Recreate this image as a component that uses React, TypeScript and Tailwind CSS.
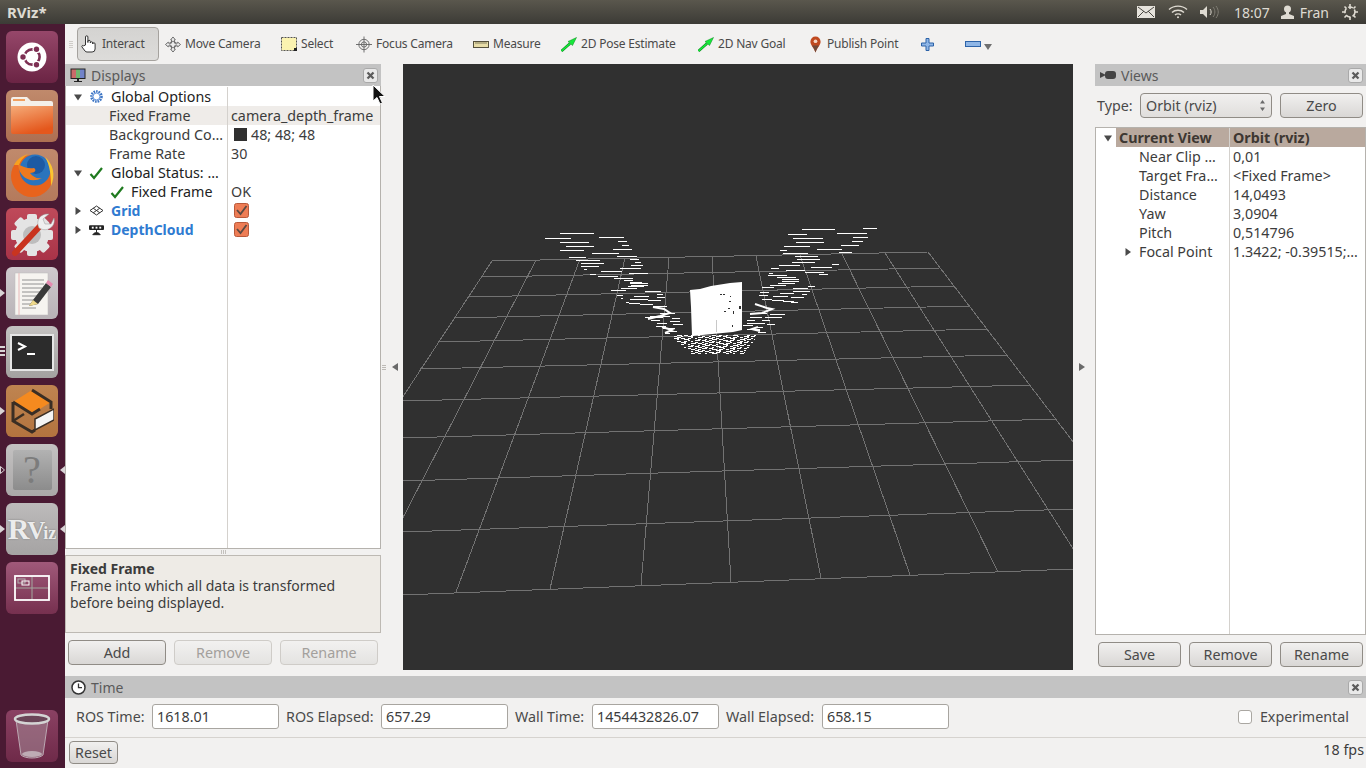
import type { ReactNode } from 'react';

const cloudLines: number[][] = [
  [120,222,70],[75,153,85],[237,312,82],[293,322,94],[120,207,97],[305,327,105],[138,222,109],[279,336,118],[120,192,121],[216,297,130],[291,351,139],[147,198,142],[168,240,151],[330,357,148],[183,252,160],[345,363,157],[183,237,169],[333,369,166],[300,363,175],[192,201,178],[243,306,184],[327,384,190],[210,228,193],[234,294,199],[282,339,205],[312,339,211],[330,366,217],[330,384,220],[333,384,226],[324,372,229],[303,351,235],[273,318,241],[375,423,244],[411,429,253],[291,309,256],[342,387,259],[411,435,262],[303,309,265],[330,384,268],[384,423,271],[318,327,277],[327,360,280],[360,400,283],[400,440,287],[420,465,310],[375,430,322],[390,450,318],[455,480,325],[393,420,331],[450,480,334],[411,440,340],[460,490,343],[408,438,349],[430,465,355],[440,470,362],[435,450,370],
  [1029,1071,55],[846,945,58],[951,1041,70],[804,861,73],[999,1044,82],[819,909,85],[996,1029,94],[828,912,97],[963,1017,106],[792,870,109],[891,966,118],[780,801,121],[957,996,127],[789,864,130],[825,894,139],[831,899,148],[840,885,157],[816,882,157],[936,957,163],[777,840,166],[873,936,172],[753,777,175],[798,855,181],[855,912,187],[747,759,190],[897,924,193],[744,801,196],[771,828,202],[786,837,208],[786,837,214],[774,825,220],[750,798,226],[864,885,229],[726,762,232],[819,864,235],[819,870,244],[720,747,247],[780,822,250],[846,861,253],[717,744,256],[759,804,259],[813,852,262],[726,756,268],[756,792,271],[789,822,274],[813,834,277],[690,740,310],[750,795,313],[690,725,322],[735,785,322],[680,705,331],[725,750,331],[680,735,340],[740,765,343],[670,700,346],[705,730,352],[680,720,358],[715,738,367],
];

const gridRows: number[][] = [
  [492,261,928,252],[481,277,940,268],[468,297,955,286],[454,318,970,306],[438,342,988,329],[420,369,1007,355],
  [403,401,1031,385],[403,438,1057,419],[403,481,1073,460],[403,532,1073,509],[403,595,1073,569],
];
const gridCols: number[][] = [
  [492,261,270,599],[536,260,363,595],[580,259,456,592],[625,258,550,589],[669,258,641,585],[712,257,731,582],
  [756,256,821,578],[800,255,910,575],[842,254,998,572],[885,253,1086,569],[928,252,1168,566],
];

const mapX = (x: number) => Math.round(x / 3 + 520);
const mapY = (y: number) => Math.round(y / 3 + 210) + 0.5;

function carpet() {
  const out: ReactNode[] = [];
  for (let r = 0; r < 19; r++) {
    const y = 376 + r * 3;
    const left = 450 + r * 3.5;
    const right = 716 - r * 2.5;
    let i = 0;
    for (let x = left + (r % 3) * 7; x < right; x += 21) {
      const len = 6 + ((r * 5 + i * 3) % 4) * 3;
      const gap = (r * 2 + i) % 5 === 0;
      if (!gap) out.push(<line key={`${r}-${i}`} x1={mapX(x)} x2={mapX(Math.min(x + len, right))} y1={mapY(y)} y2={mapY(y)} />);
      i++;
    }
  }
  return out;
}

function Viewport() {
  return (
    <svg viewBox="403 64 670 606" className="block h-[606px] w-[670px] shrink-0 bg-[#303030]">
      <g stroke="#727272" strokeWidth="1" shapeRendering="crispEdges">
        {gridRows.map((l, i) => <line key={i} x1={l[0]} y1={l[1]} x2={l[2]} y2={l[3]} />)}
        {gridCols.map((l, i) => <line key={i} x1={l[0]} y1={l[1]} x2={l[2]} y2={l[3]} />)}
      </g>
      <g stroke="#fff" strokeWidth="1" shapeRendering="crispEdges">
        {cloudLines.map((l, i) => <line key={i} x1={mapX(l[0])} x2={mapX(l[1])} y1={mapY(l[2])} y2={mapY(l[2])} />)}
        {carpet()}
      </g>
      <path d="M690 290 L700 289 L711 286 L730 283 L742 282 L742 330 L733 332 L692 336 L691 307Z" fill="#fff" />
      <g fill="#303030" shapeRendering="crispEdges">
        <rect x="720" y="294" width="2" height="1" /><rect x="723" y="294" width="2" height="1" /><rect x="730" y="296" width="1" height="1" />
        <rect x="729" y="301" width="2" height="1" /><rect x="728" y="308" width="2" height="1" /><rect x="724" y="311" width="2" height="1" />
        <rect x="733" y="311" width="1" height="3" /><rect x="739" y="306" width="2" height="3" /><rect x="732" y="325" width="1" height="2" />
      </g>
      <rect x="716" y="320" width="1" height="12" fill="#c8c8c8" />
      <g fill="none" stroke="#fff" strokeWidth="2">
        <path d="M653 307 L664 309 L670 313 L660 316 L648 319" />
        <path d="M755 304 L767 308 L772 309 L762 313 L750 314" />
        <path d="M662 327 L672 330 L665 333" />
        <path d="M758 327 L752 329 L760 331" />
      </g>
    </svg>
  );
}

function TreeArrow({ open }: { open?: boolean }) {
  return (
    <svg width="10" height="10" viewBox="0 0 10 10" className="shrink-0">
      {open ? <path d="M1 2.5h8L5 8.5z" fill="#4a4a4a" /> : <path d="M2.5 1v8L8 5z" fill="#4a4a4a" />}
    </svg>
  );
}

function Check() {
  return (
    <svg width="15" height="14" viewBox="0 0 15 14" className="shrink-0">
      <path d="M1.5 8 L5 12 L13 2" fill="none" stroke="#1f7a1f" strokeWidth="2.2" />
    </svg>
  );
}

function OrangeBox() {
  return (
    <svg width="15" height="15" viewBox="0 0 15 15">
      <rect x="0.5" y="0.5" width="14" height="14" rx="2" fill="#ee7d55" stroke="#b9593a" />
      <path d="M3 7 L6.5 11 L12.5 3" fill="none" stroke="#5b4a42" strokeWidth="1.8" />
    </svg>
  );
}

function GearIcon() {
  return (
    <svg width="15" height="15" viewBox="0 0 15 15">
      <circle cx="7.5" cy="7.5" r="5" fill="none" stroke="#3f76c4" strokeWidth="2.6" strokeDasharray="1.6 0.9" />
      <circle cx="7.5" cy="7.5" r="3.4" fill="none" stroke="#6c9be0" strokeWidth="1" />
    </svg>
  );
}

function GridIcon() {
  return (
    <svg width="15" height="11" viewBox="0 0 15 11">
      <path d="M7.5 1 L14 5.5 L7.5 10 L1 5.5Z M4.2 3.2 L10.8 7.8 M10.8 3.2 L4.2 7.8" fill="none" stroke="#333" strokeWidth="1" />
    </svg>
  );
}

function DepthIcon() {
  return (
    <svg width="16" height="12" viewBox="0 0 16 12">
      <rect x="0" y="1" width="16" height="5" rx="1" fill="#222" />
      <rect x="3" y="2.5" width="2" height="2" fill="#fff" /><rect x="7" y="2.5" width="2" height="2" fill="#fff" /><rect x="11" y="2.5" width="2" height="2" fill="#fff" />
      <path d="M8 6v3M4 11h8l-2-2H6z" fill="#222" stroke="#222" />
    </svg>
  );
}

function CloseBtn() {
  return (
    <button className="flex h-[15px] w-[15px] items-center justify-center rounded-[3px] border border-[#a9a9a9] bg-[#e9e9e9]">
      <svg width="9" height="9" viewBox="0 0 9 9"><path d="M1.5 1.5 L7.5 7.5 M7.5 1.5 L1.5 7.5" stroke="#5c5c5c" strokeWidth="2.3" /></svg>
    </button>
  );
}

function TitleBar({ icon, title }: { icon: ReactNode; title: string }) {
  return (
    <div className="flex h-[22px] shrink-0 items-center bg-[#c3c3c3] pl-[4px] pr-[3px]">
      <span className="flex w-[18px] shrink-0 justify-center">{icon}</span>
      <span className="ml-[4px] text-[14px] text-[#5a5a5a]">{title}</span>
      <span className="ml-auto"><CloseBtn /></span>
    </div>
  );
}

function Btn({ label, disabled, className }: { label: string; disabled?: boolean; className: string }) {
  return (
    <button
      className={`flex h-[25px] items-center justify-center rounded-[4px] border bg-gradient-to-b text-[14.3px] ${className} ${
        disabled ? 'border-[#cfccc8] from-[#f2f1f0] to-[#e4e3e1] text-[#a3a09c]' : 'border-[#908c86] from-[#f1f0ef] to-[#d9d7d5] text-[#4a4a4a]'
      }`}
    >
      {label}
    </button>
  );
}

function Field({ label, value, labelClass }: { label: string; value: string; labelClass: string }) {
  return (
    <div className="flex items-center">
      <span className={`whitespace-nowrap text-[14.3px] text-[#4a4a4a] ${labelClass}`}>{label}</span>
      <div className="flex h-[25px] w-[127px] items-center rounded-[3px] border border-[#a8a5a0] bg-white pl-[4px] text-[14.3px] text-[#3c3c3c]">{value}</div>
    </div>
  );
}

function Row({ left, right, leftClass = '', rowClass = '', rightClass = '', leftW }: { left: ReactNode; right?: ReactNode; leftClass?: string; rowClass?: string; rightClass?: string; leftW: string }) {
  return (
    <div className={`flex h-[19px] items-center text-[14.3px] ${rowClass}`}>
      <div className={`flex h-full shrink-0 items-center overflow-hidden whitespace-nowrap ${leftW} ${leftClass}`}>{left}</div>
      <div className={`flex h-full min-w-0 flex-1 items-center whitespace-nowrap border-l border-[#d4d1cd] pl-[3px] ${rightClass}`}>{right}</div>
    </div>
  );
}

function DisplaysPanel() {
  const w = 'w-[161px]';
  const sub = 'pl-[43px] text-[#3c3c3c]';
  return (
    <div className="flex w-[316px] shrink-0 flex-col">
      <TitleBar
        title="Displays"
        icon={
          <svg width="16" height="15" viewBox="0 0 16 15">
            <rect x="0.5" y="0.5" width="15" height="10.5" fill="#222" />
            <rect x="1.5" y="1.5" width="4.5" height="8.5" fill="#c96a6a" /><rect x="6" y="1.5" width="4" height="8.5" fill="#6fb56f" /><rect x="10" y="1.5" width="4.5" height="8.5" fill="#7183c9" />
            <path d="M7 11h2v2h3v1H4v-1h3z" fill="#222" />
          </svg>
        }
      />
      <div className="flex h-[463px] shrink-0 flex-col border-x border-b border-[#b5b2ad] bg-white pt-px text-[#3c3c3c]">
        <Row leftW={w} leftClass="pl-[7px] text-[#222]" left={<><TreeArrow open /><span className="ml-[6px] flex w-[15px] justify-center"><GearIcon /></span><span className="ml-[7px]">Global Options</span></>} />
        <Row leftW={w} leftClass={sub} rowClass="bg-[#efece9]" left="Fixed Frame" right="camera_depth_frame" />
        <Row leftW={w} leftClass={sub} left="Background Co…" right={<><span className="mr-[4px] ml-[3px] h-[13px] w-[13px] bg-[#303030]" />48; 48; 48</>} />
        <Row leftW={w} leftClass={sub} left="Frame Rate" right="30" />
        <Row leftW={w} leftClass="pl-[7px] text-[#222]" left={<><TreeArrow open /><span className="ml-[6px] flex w-[15px] justify-center"><Check /></span><span className="ml-[7px]">Global Status: …</span></>} />
        <Row leftW={w} leftClass="pl-[44px] text-[#222]" left={<><Check /><span className="ml-[6px]">Fixed Frame</span></>} right="OK" />
        <Row leftW={w} leftClass="pl-[7px] text-[14px] font-bold text-[#2f7bd1]" left={<><TreeArrow /><span className="ml-[6px] flex w-[15px] justify-center"><GridIcon /></span><span className="ml-[7px]">Grid</span></>} right={<span className="ml-[3px] flex"><OrangeBox /></span>} />
        <Row leftW={w} leftClass="pl-[7px] text-[14px] font-bold text-[#2f7bd1]" left={<><TreeArrow /><span className="ml-[6px] flex w-[15px] justify-center"><DepthIcon /></span><span className="ml-[7px]">DepthCloud</span></>} right={<span className="ml-[3px] flex"><OrangeBox /></span>} />
        <div className="flex flex-1">
          <div className="w-[161px] shrink-0" />
          <div className="flex-1 border-l border-[#d4d1cd]" />
        </div>
      </div>
      <div className="flex h-[6px] shrink-0 items-center justify-center gap-px">
        <span className="h-[4px] w-px bg-[#c4c1bd]" /><span className="h-[4px] w-px bg-[#c4c1bd]" /><span className="h-[4px] w-px bg-[#c4c1bd]" />
      </div>
      <div className="h-[78px] shrink-0 border border-[#bdb9b3] bg-[#eeebe6] px-[4px] pt-[4px] text-[14px] leading-[17px] text-[#3c3c3c]">
        <div className="font-bold">Fixed Frame</div>
        <div>Frame into which all data is transformed</div>
        <div>before being displayed.</div>
      </div>
      <div className="mt-[7px] flex gap-[8px] pl-[3px]">
        <Btn label="Add" className="w-[98px]" />
        <Btn label="Remove" disabled className="w-[98px]" />
        <Btn label="Rename" disabled className="w-[98px]" />
      </div>
    </div>
  );
}

function ViewsPanel() {
  const w = 'w-[133px]';
  const sub = 'pl-[43px]';
  return (
    <div className="flex w-[271px] shrink-0 flex-col">
      <TitleBar
        title="Views"
        icon={
          <svg width="16" height="10" viewBox="0 0 16 10"><path d="M0 2 L5 4.5 V5.5 L0 8Z" fill="#444" /><rect x="5" y="1" width="11" height="8" rx="3" fill="#444" /></svg>
        }
      />
      <div className="flex h-[41px] shrink-0 items-center pb-[2px] pl-[2px]">
        <span className="w-[43px] text-[14.3px] text-[#4a4a4a]">Type:</span>
        <div className="flex h-[25px] w-[132px] items-center justify-between rounded-[4px] border border-[#908c86] bg-gradient-to-b from-[#f1f0ef] to-[#e0dedc] pl-[5px] pr-[5px] text-[14.3px] text-[#4a4a4a]">
          Orbit (rviz)
          <svg width="7" height="13" viewBox="0 0 7 13"><path d="M3.5 1 L6 4.5H1z M3.5 12 L6 8.5H1z" fill="#6a6a6a" /></svg>
        </div>
        <Btn label="Zero" className="ml-[8px] w-[83px]" />
      </div>
      <div className="flex h-[508px] shrink-0 flex-col border border-[#b5b2ad] bg-white text-[#3c3c3c]">
        <Row leftW={w} leftClass="pl-[7px] bg-white" rowClass="font-bold" rightClass="bg-[#b9a99e] text-[#3d3732]" left={<><TreeArrow open /><span className="ml-[3px] flex h-full flex-1 items-center bg-[#b9a99e] pl-[3px] text-[#3d3732]">Current View</span></>} right="Orbit (rviz)" />
        <Row leftW={w} leftClass={sub} left="Near Clip …" right="0,01" />
        <Row leftW={w} leftClass={sub} left="Target Fra…" right="<Fixed Frame>" />
        <Row leftW={w} leftClass={sub} left="Distance" right="14,0493" />
        <Row leftW={w} leftClass={sub} left="Yaw" right="3,0904" />
        <Row leftW={w} leftClass={sub} left="Pitch" right="0,514796" />
        <Row leftW={w} leftClass="pl-[27px]" left={<><TreeArrow /><span className="ml-[6px]">Focal Point</span></>} right="1.3422; -0.39515;…" />
        <div className="flex flex-1">
          <div className="w-[133px] shrink-0" />
          <div className="flex-1 border-l border-[#d4d1cd]" />
        </div>
      </div>
      <div className="mt-[7px] flex gap-[8px] pl-[3px]">
        <Btn label="Save" className="w-[83px]" />
        <Btn label="Remove" className="w-[83px]" />
        <Btn label="Rename" className="w-[83px]" />
      </div>
    </div>
  );
}

function SplitterLeft() {
  return (
    <div className="flex h-[606px] w-[22px] shrink-0 items-center gap-[6px] pl-px">
      <span className="flex flex-col gap-px">
        <span className="h-px w-[4px] bg-[#bdbab6]" /><span className="h-px w-[4px] bg-[#bdbab6]" /><span className="h-px w-[4px] bg-[#bdbab6]" />
      </span>
      <svg width="6" height="8" viewBox="0 0 6 8"><path d="M6 0v8L0 4z" fill="#6a6a6a" /></svg>
    </div>
  );
}

function SplitterRight() {
  return (
    <div className="flex h-[606px] w-[22px] shrink-0 items-center pl-[6px]">
      <svg width="6" height="8" viewBox="0 0 6 8"><path d="M0 0v8l6-4z" fill="#6a6a6a" /></svg>
    </div>
  );
}

function ToolItem({ icon, label, className }: { icon: ReactNode; label: string; className: string }) {
  return (
    <div className={`flex items-center text-[12px] tracking-[-0.2px] text-[#4a4a4a] ${className}`}>
      <span className="flex w-[16px] shrink-0 justify-center">{icon}</span>
      <span className="ml-[4px] whitespace-nowrap">{label}</span>
    </div>
  );
}

function MoveIcon() {
  return (
    <svg width="17" height="17" viewBox="0 0 17 17" fill="#ececec" stroke="#666">
      <path d="M8.5 .5 L11 3.5 H10 V7 H13.5 V6 L16.5 8.5 L13.5 11 V10 H10 V13.5 H11 L8.5 16.5 L6 13.5 H7 V10 H3.5 V11 L.5 8.5 L3.5 6 V7 H7 V3.5 H6Z" />
      <circle cx="8.5" cy="8.5" r="3.4" fill="none" strokeWidth="0.8" />
    </svg>
  );
}

function NavArrow() {
  return (
    <svg width="16" height="15" viewBox="0 0 16 15">
      <path d="M0.5 14 L9 6.5" stroke="#0a8a1d" strokeWidth="2.6" />
      <path d="M0.5 14 L9 6.5" stroke="#16f03c" strokeWidth="1.4" />
      <path d="M7 4.5 L15.5 0.5 L11.5 8.5Z" fill="#16e83a" stroke="#0a8a1d" strokeWidth="0.5" />
    </svg>
  );
}

function Toolbar() {
  return (
    <div className="flex h-[40px] shrink-0 items-center pl-[4px]">
      <span className="flex w-[8px] shrink-0 flex-col gap-px pt-px">
        <span className="h-px w-[4px] bg-[#cfccc8]" /><span className="h-px w-[4px] bg-[#cfccc8]" /><span className="h-px w-[4px] bg-[#cfccc8]" /><span className="h-px w-[4px] bg-[#cfccc8]" />
      </span>
      <div className="flex h-[34px] w-[82px] shrink-0 items-center rounded-[4px] border border-[#a5a29e] bg-gradient-to-b from-[#d4d3d1] to-[#dddcda] pl-[3px] text-[12px] tracking-[-0.2px] text-[#4a4a4a]">
        <svg width="17" height="18" viewBox="0 0 17 18" fill="#fff" stroke="#333">
          <path d="M4.5 10 V2 a1.2 1.2 0 0 1 2.4 0 V7.5 V6.5 a1.2 1.2 0 0 1 2.4 0 V8 a1.2 1.2 0 0 1 2.4 0 V9 a1.2 1.2 0 0 1 2.4 0 V14 a3 3 0 0 1-3 3 H6 a2.5 2.5 0 0 1-2-1 L1 12 c-.7-1 .7-2.2 1.6-1.2z" />
        </svg>
        <span className="ml-[4px]">Interact</span>
      </div>
      <ToolItem className="ml-[6px] w-[116px]" label="Move Camera" icon={<MoveIcon />} />
      <ToolItem className="w-[75px]" label="Select" icon={<svg width="16" height="14" viewBox="0 0 16 14"><rect x="0.5" y="0.5" width="15" height="13" fill="#fbf3b0" stroke="#555" strokeDasharray="2 1" /><rect x="13" y="11" width="3" height="3" fill="#222" /></svg>} />
      <ToolItem className="w-[117px]" label="Focus Camera" icon={
        <svg width="17" height="17" viewBox="0 0 17 17" fill="none" stroke="#666"><circle cx="8.5" cy="8.5" r="5.5" /><path d="M8.5 0 V17 M0 8.5 H17" /><circle cx="8.5" cy="8.5" r="2.8" /></svg>
      } />
      <ToolItem className="w-[88px]" label="Measure" icon={<svg width="16" height="7" viewBox="0 0 16 7"><rect x="0.5" y="0.5" width="15" height="6" fill="#e8dda8" stroke="#55503d" /><path d="M3 1v2M5 1v2M7 1v2M9 1v2M11 1v2M13 1v2" stroke="#55503d" strokeWidth="0.7" /></svg>} />
      <ToolItem className="w-[137px]" label="2D Pose Estimate" icon={<NavArrow />} />
      <ToolItem className="w-[109px]" label="2D Nav Goal" icon={<NavArrow />} />
      <ToolItem className="w-[114px]" label="Publish Point" icon={
        <svg width="13" height="17" viewBox="0 0 14 18"><path d="M7 0.5 a5.5 5.5 0 0 1 5.5 5.5 c0 3.5-3.5 6-5.5 11.5 C5 12 1.5 9.5 1.5 6 A5.5 5.5 0 0 1 7 0.5z" fill="#c0491f" /><path d="M3.3 10 H10.7 C9 12.5 8 14.5 7 17.5 C6 14.5 5 12.5 3.3 10z" fill="#6e4a3a" /><circle cx="7" cy="5.5" r="2" fill="#f4d6c4" /></svg>
      } />
      <svg width="13" height="13" viewBox="0 0 13 13" className="shrink-0"><path d="M5 .5h3v4.5h4.5v3H8v4.5H5V8H.5V5H5z" fill="#8fb6e6" stroke="#2d63a8" /></svg>
      <svg width="16" height="6" viewBox="0 0 16 6" className="ml-[31px] shrink-0"><rect x="0.5" y="0.5" width="15" height="5" fill="#8fb6e6" stroke="#2d63a8" /></svg>
      <svg width="8" height="6" viewBox="0 0 8 6" className="ml-[3px] mt-[6px] shrink-0"><path d="M0 0h8L4 6z" fill="#6f6f6f" /></svg>
    </div>
  );
}

function Tile({ className, pipL, pipR, children }: { className: string; pipL?: 'one' | 'three' | 'hollow'; pipR?: boolean; children: ReactNode }) {
  return (
    <div className="relative h-[52px] w-[65px] shrink-0">
      {pipL === 'one' && <svg width="5" height="8" viewBox="0 0 5 8" className="absolute left-0 top-[22px]"><path d="M0 0l5 4-5 4z" fill="#d9d4d6" /></svg>}
      {pipL === 'hollow' && <svg width="5" height="8" viewBox="0 0 5 8" className="absolute left-0 top-[22px]"><path d="M.5 .5l4 3.5-4 3.5z" fill="none" stroke="#d9d4d6" /></svg>}
      {pipL === 'three' && (
        <span className="absolute left-0 top-[20px] flex flex-col gap-[2px]">
          <span className="h-[2px] w-[5px] bg-[#d9d4d6]" /><span className="h-[2px] w-[5px] bg-[#d9d4d6]" /><span className="h-[2px] w-[5px] bg-[#d9d4d6]" />
        </span>
      )}
      {pipR && <svg width="5" height="8" viewBox="0 0 5 8" className="absolute right-0 top-[22px]"><path d="M5 0L0 4l5 4z" fill="#d9d4d6" /></svg>}
      <div className={`absolute left-[6px] top-0 flex h-[52px] w-[52px] items-center justify-center overflow-hidden rounded-[6px] bg-gradient-to-b ${className}`}>
        {children}
      </div>
    </div>
  );
}

function Launcher() {
  return (
    <div className="flex w-[65px] shrink-0 flex-col gap-[7px] bg-[#4a1a33] pb-[6px] pt-[7px]">
      <Tile className="from-[#96476a] to-[#6b2444]">
        <svg width="30" height="30" viewBox="0 0 30 30">
          <circle cx="15" cy="15" r="14.5" fill="#fff" />
          <circle cx="15" cy="15" r="7.6" fill="none" stroke="#7d2f53" strokeWidth="2.6" />
          <circle cx="6" cy="15" r="4" fill="#fff" /><circle cx="19.5" cy="7.2" r="4" fill="#fff" /><circle cx="19.5" cy="22.8" r="4" fill="#fff" />
          <circle cx="6" cy="15" r="2.7" fill="#7d2f53" /><circle cx="19.5" cy="7.2" r="2.7" fill="#7d2f53" /><circle cx="19.5" cy="22.8" r="2.7" fill="#7d2f53" />
        </svg>
      </Tile>
      <Tile className="from-[#c08a6c] to-[#ad6f52]">
        <svg width="46" height="40" viewBox="0 0 46 40">
          <defs>
            <linearGradient id="folderBody" x1="0" y1="0" x2="0.4" y2="1">
              <stop offset="0" stopColor="#f5ab78" />
              <stop offset="1" stopColor="#e4571c" />
            </linearGradient>
          </defs>
          <path d="M2 3 a2 2 0 0 1 2-2 h14 l4 4 h20 a2 2 0 0 1 2 2 v8 H2z" fill="#f4f0ea" />
          <rect x="4" y="3" width="12" height="2" fill="#f0a060" />
          <path d="M2 10 H44 V36 a2 2 0 0 1-2 2 H4 a2 2 0 0 1-2-2z" fill="url(#folderBody)" />
        </svg>
      </Tile>
      <Tile className="from-[#c08a6c] to-[#b47a5c]">
        <svg width="48" height="48" viewBox="0 0 48 48">
          <circle cx="24" cy="25" r="21" fill="#e8631c" />
          <circle cx="27" cy="19" r="15.5" fill="#2b74bd" />
          <circle cx="28" cy="14" r="9" fill="#1d5aa3" />
          <path d="M10 13 C11 26 22 33 34 27 C29 28 25 26 22 22 C27 22 29 19 26 17 C20 18 15 16 10 13Z" fill="#ee7a1f" />
          <path d="M37 6 C45 13 48 24 43 35 C43 25 42 14 37 6Z" fill="#fbc531" />
          <path d="M6 14 C9 8 14 5 20 3 C15 7 12 10 11 14Z" fill="#f7a11f" />
        </svg>
      </Tile>
      <Tile className="from-[#bf4a5a] to-[#a93348]">
        <svg width="48" height="48" viewBox="0 0 48 48">
          <g fill="#e4e4e4">
            <circle cx="24" cy="25" r="17" />
            <rect x="19" y="4" width="10" height="42" rx="2" />
            <rect x="3" y="20" width="42" height="10" rx="2" />
            <rect x="19" y="4" width="10" height="42" rx="2" transform="rotate(45 24 25)" />
            <rect x="19" y="4" width="10" height="42" rx="2" transform="rotate(-45 24 25)" />
          </g>
          <circle cx="24" cy="25" r="9" fill="#bdbdbd" />
          <path d="M7 43 L33 15" stroke="#c9341f" strokeWidth="6" strokeLinecap="round" />
          <path d="M31 18 C27 10 33 3 41 4 L35 9 L37 14 L43 14 L46 8 C48 16 40 23 31 18Z" fill="#efefef" stroke="#999" strokeWidth="0.5" />
        </svg>
      </Tile>
      <Tile pipL="one" className="from-[#cfcacd] to-[#b9b3b7]">
        <svg width="44" height="44" viewBox="0 0 44 44">
          <rect x="5" y="2" width="33" height="42" fill="#f6f4f0" stroke="#bbb" strokeWidth="0.5" />
          <path d="M9 2v42" stroke="#e8b8b8" />
          <path d="M12 9h22M12 13h22M12 17h20M12 21h22M12 25h18M12 29h16M12 33h12M12 37h14" stroke="#7a7a7a" strokeWidth="0.8" />
          <path d="M19 35 L23 29 L36 12 L41 16 L28 33z" fill="#3a3a3a" />
          <path d="M19 35 L23 29 L28 33z" fill="#efd98a" />
          <path d="M36 12 L38 9 L43 13 L41 16z" fill="#e68bb0" />
        </svg>
      </Tile>
      <Tile pipL="three" className="from-[#c4c2c1] to-[#a3a1a0]">
        <div className="flex h-[37px] w-[44px] items-start border-[2px] border-[#e6e6e6] bg-[#2c2c2c] pl-[5px] pt-[5px]">
          <svg width="20" height="16" viewBox="0 0 20 16"><path d="M1 2 L8 5.5 L1 9" fill="none" stroke="#fff" strokeWidth="2" /><rect x="10" y="12" width="8" height="2" fill="#fff" /></svg>
        </div>
      </Tile>
      <Tile pipL="one" className="from-[#bf8450] to-[#b3743f]">
        <svg width="44" height="48" viewBox="0 0 44 48">
          <path d="M22 3 L41 15 L22 27 L3 15Z" fill="#f58a1f" />
          <path d="M22 3 L41 15 L41 22 M3 15 V34 L22 45 L25 43 M3 15 L22 27 L30 22" fill="none" stroke="#3a2e24" strokeWidth="3" />
          <path d="M25 32 L44 22 V33 L25 43Z" fill="#f5f5f5" stroke="#3a2e24" strokeWidth="1.5" />
          <path d="M3 34 L14 27" stroke="#3a2e24" strokeWidth="2.5" />
        </svg>
      </Tile>
      <Tile pipL="hollow" pipR className="from-[#c4c2c2] to-[#aaa8a8]">
        <div className="flex h-[40px] w-[39px] items-center justify-center rounded-[2px] bg-gradient-to-b from-[#b2b2b2] to-[#8c8c8c]">
          <span className="font-['Liberation_Serif',serif] text-[40px] leading-none text-[#7c7c7c]">?</span>
        </div>
      </Tile>
      <Tile pipL="one" pipR className="from-[#bdbbbb] to-[#a5a3a3]">
        <span className="flex items-baseline font-['Liberation_Serif',serif] font-bold leading-none text-[#ececec] [text-shadow:0_0_2px_#777]">
          <span className="text-[30px]">R</span>
          <span className="-ml-[2px] text-[25px]">V</span>
          <span className="-ml-[2px] text-[18px]">iz</span>
        </span>
      </Tile>
      <Tile className="from-[#a0597a] to-[#76304f]">
        <svg width="36" height="26" viewBox="0 0 36 26" fill="none">
          <path d="M18 1 V25 M1 13 H35" stroke="#a3a89f" />
          <rect x="1" y="1" width="34" height="24" stroke="#fff" strokeWidth="1.8" />
          <rect x="4" y="4" width="7" height="4" stroke="#b0b0b0" />
          <rect x="8" y="6" width="7" height="4" stroke="#fff" />
        </svg>
      </Tile>
      <div className="mt-auto">
        <Tile className="from-[#8a4163] to-[#6f2a49]">
          <svg width="38" height="46" viewBox="0 0 38 46">
            <path d="M3 7 L8 42 C12 46 26 46 30 42 L35 7Z" fill="#a68b98" fillOpacity="0.55" stroke="#bba7b1" />
            <ellipse cx="19" cy="41" rx="10" ry="3" fill="#ddd" fillOpacity="0.6" />
            <ellipse cx="19" cy="6" rx="17" ry="4.5" fill="#6b4558" stroke="#d4d4d4" strokeWidth="2.5" />
          </svg>
        </Tile>
      </div>
    </div>
  );
}

function TopBar() {
  return (
    <div className="flex h-[24px] shrink-0 items-center bg-gradient-to-b from-[#5a574d] to-[#3c3b36] pl-[7px] pr-[8px] text-[#dfdbd2]">
      <span className="text-[15px] font-bold">RViz*</span>
      <svg width="18" height="12" viewBox="0 0 18 12" fill="none" stroke="#e6e3dc" className="ml-auto"><rect x="0.5" y="0.5" width="17" height="11" fill="#e6e3dc" /><path d="M1 1 L9 7 L17 1 M1 11 L7 5 M17 11 L11 5" stroke="#4a4842" /></svg>
      <svg width="20" height="14" viewBox="0 0 20 14" fill="none" stroke="#dfdbd2" strokeWidth="1.4" className="ml-[13px]">
        <path d="M1 4.5 C6 0 14 0 19 4.5 M4 7.5 C7 4.5 13 4.5 16 7.5 M7 10 C8.5 8.5 11.5 8.5 13 10" /><circle cx="10" cy="12.3" r="1" fill="#dfdbd2" stroke="none" />
      </svg>
      <svg width="20" height="14" viewBox="0 0 20 14" fill="none" className="ml-[12px]">
        <path d="M0 5h3l4-4v12l-4-4H0z" fill="#dfdbd2" /><path d="M10 4c1.5 2 1.5 4 0 6" stroke="#dfdbd2" /><path d="M13 2c2.5 3 2.5 7 0 10M16 1c3 4 3 8 0 12" stroke="#807d74" />
      </svg>
      <span className="ml-[14px] text-[14px]">18:07</span>
      <svg width="13" height="14" viewBox="0 0 13 14" className="ml-[11px]"><circle cx="6.5" cy="4" r="3.5" fill="#dfdbd2" /><path d="M5 7h3v2l5 2v3H0v-3l5-2z" fill="#dfdbd2" /></svg>
      <span className="ml-[6px] text-[14px]">Fran</span>
      <svg width="16" height="16" viewBox="0 0 16 16" fill="none" stroke="#dfdbd2" className="ml-[13px]">
        <circle cx="8" cy="8" r="5" strokeWidth="1.6" strokeDasharray="5 2" /><path d="M8 0v5M8 13v3M0 8h3M13 8h3M2.5 2.5l2 2M11.5 11.5l2 2M13.5 2.5l-2 2M4.5 11.5l-2 2" strokeWidth="1.6" />
      </svg>
    </div>
  );
}

function TimePanel() {
  return (
    <div className="flex h-[92px] shrink-0 flex-col">
      <TitleBar
        title="Time"
        icon={<svg width="15" height="15" viewBox="0 0 15 15" fill="#fff" stroke="#333"><circle cx="7.5" cy="7.5" r="6.5" strokeWidth="1.5" /><path d="M7.5 3.5v4.2h3.5" fill="none" strokeWidth="1.3" /></svg>}
      />
      <div className="flex h-[40px] shrink-0 items-center border-b border-[#d6d3cf] pb-[2px] pl-[11px] pr-[17px]">
        <Field label="ROS Time:" labelClass="w-[76px]" value="1618.01" />
        <div className="ml-[7px]"><Field label="ROS Elapsed:" labelClass="w-[95px]" value="657.29" /></div>
        <div className="ml-[7px]"><Field label="Wall Time:" labelClass="w-[77px]" value="1454432826.07" /></div>
        <div className="ml-[7px]"><Field label="Wall Elapsed:" labelClass="w-[96px]" value="658.15" /></div>
        <div className="ml-auto flex items-center text-[14.3px] text-[#4a4a4a]">
          <span className="h-[14px] w-[14px] rounded-[3px] border border-[#aaa7a2] bg-white" />
          <span className="ml-[8px]">Experimental</span>
        </div>
      </div>
      <div className="flex flex-1 items-start justify-between pl-[4px] pr-[2px] pt-[3px]">
        <button className="flex h-[23px] w-[49px] items-center justify-center rounded-[4px] border border-[#908c86] bg-gradient-to-b from-[#f1f0ef] to-[#d9d7d5] text-[14.3px] text-[#4a4a4a]">Reset</button>
        <span className="text-[14.3px] leading-[18px] text-[#3c3c3c]">18 fps</span>
      </div>
    </div>
  );
}

export default function App() {
  return (
    <div className="relative flex h-[768px] w-[1366px] flex-col overflow-hidden bg-[#f2f1f0] font-['Noto_Sans',sans-serif]">
      <TopBar />
      <div className="flex min-h-0 flex-1">
        <Launcher />
        <div className="flex min-w-0 flex-1 flex-col">
          <Toolbar />
          <div className="flex h-[612px] shrink-0">
            <DisplaysPanel />
            <SplitterLeft />
            <Viewport />
            <SplitterRight />
            <ViewsPanel />
          </div>
          <TimePanel />
        </div>
      </div>
      {/* mouse pointer caught in the screenshot */}
      <svg width="14" height="21" viewBox="0 0 14 21" className="absolute left-[372px] top-[84px]">
        <path d="M1 1 V17 L5 13.5 L8 20 L10.5 19 L7.5 12.5 H13Z" fill="#111" stroke="#fff" />
      </svg>
    </div>
  );
}
